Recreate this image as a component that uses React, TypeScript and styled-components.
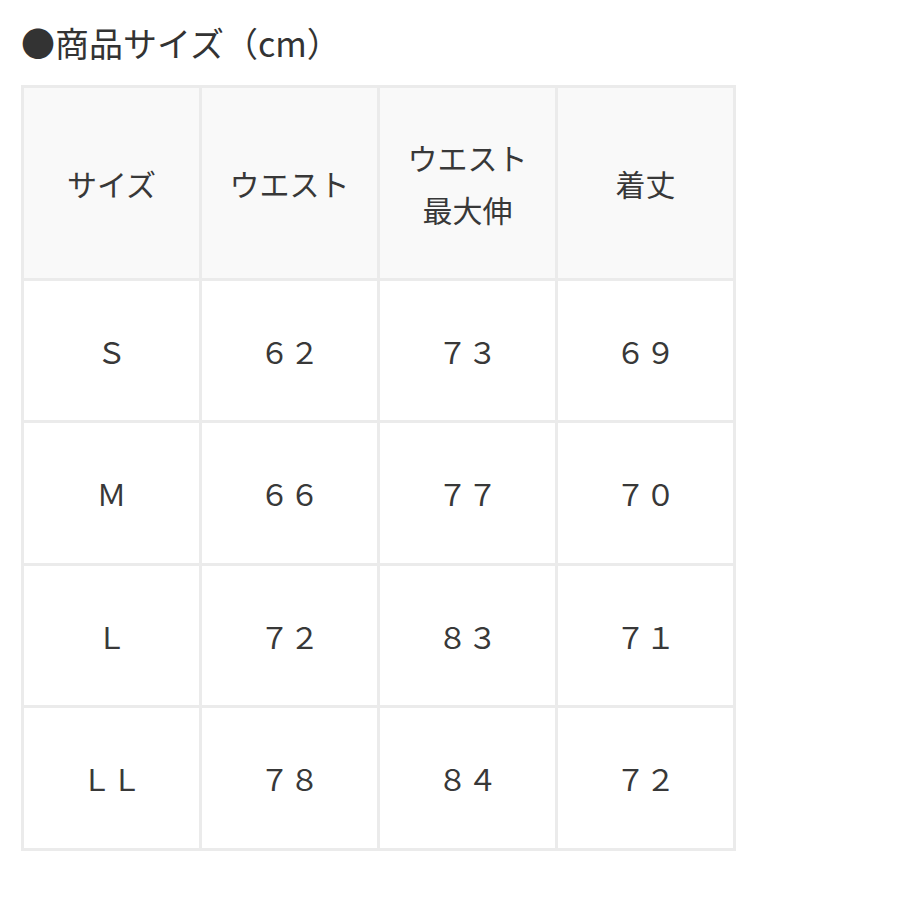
import React from 'react';
import styled, { createGlobalStyle } from 'styled-components';

const GlobalStyle = createGlobalStyle`
  html, body {
    margin: 0;
    padding: 0;
    background: #ffffff;
  }
  body {
    font-family: "Noto Sans CJK JP", "Noto Sans", sans-serif;
    color: #333333;
  }
`;

const Page = styled.div`
  width: 900px;
  height: 900px;
  padding: 19px 0 0 21px;
  box-sizing: border-box;
`;

const Title = styled.h2`
  margin: 0 0 18px 0;
  font-size: 34px;
  font-weight: 400;
  line-height: 48px;
  color: #333333;
  letter-spacing: 0;
`;

const Table = styled.div`
  display: grid;
  grid-template-columns: repeat(4, 175px);
  grid-template-rows: 190px 139px 140px 139px 140px;
  gap: 3px;
  padding: 3px;
  width: max-content;
  background: #ebebeb;
`;

const Cell = styled.div<{ $head?: boolean }>`
  display: flex;
  align-items: center;
  justify-content: center;
  text-align: center;
  background: ${p => (p.$head ? '#f9f9f9' : '#ffffff')};
  font-size: 30px;
  line-height: 52px;
  color: #383838;
  white-space: pre-line;
`;

const headers = ['サイズ', 'ウエスト', 'ウエスト\n最大伸', '着丈'];

const rows = [
  ['Ｓ', '６２', '７３', '６９'],
  ['Ｍ', '６６', '７７', '７０'],
  ['Ｌ', '７２', '８３', '７１'],
  ['ＬＬ', '７８', '８４', '７２'],
];

export default function App() {
  return (
    <>
      <GlobalStyle />
      <Page>
        <Title>●商品サイズ（cm）</Title>
        <Table>
          {headers.map(h => (
            <Cell key={h} $head>{h}</Cell>
          ))}
          {rows.map((row, i) =>
            row.map((v, j) => <Cell key={`${i}-${j}`}>{v}</Cell>)
          )}
        </Table>
      </Page>
    </>
  );
}
